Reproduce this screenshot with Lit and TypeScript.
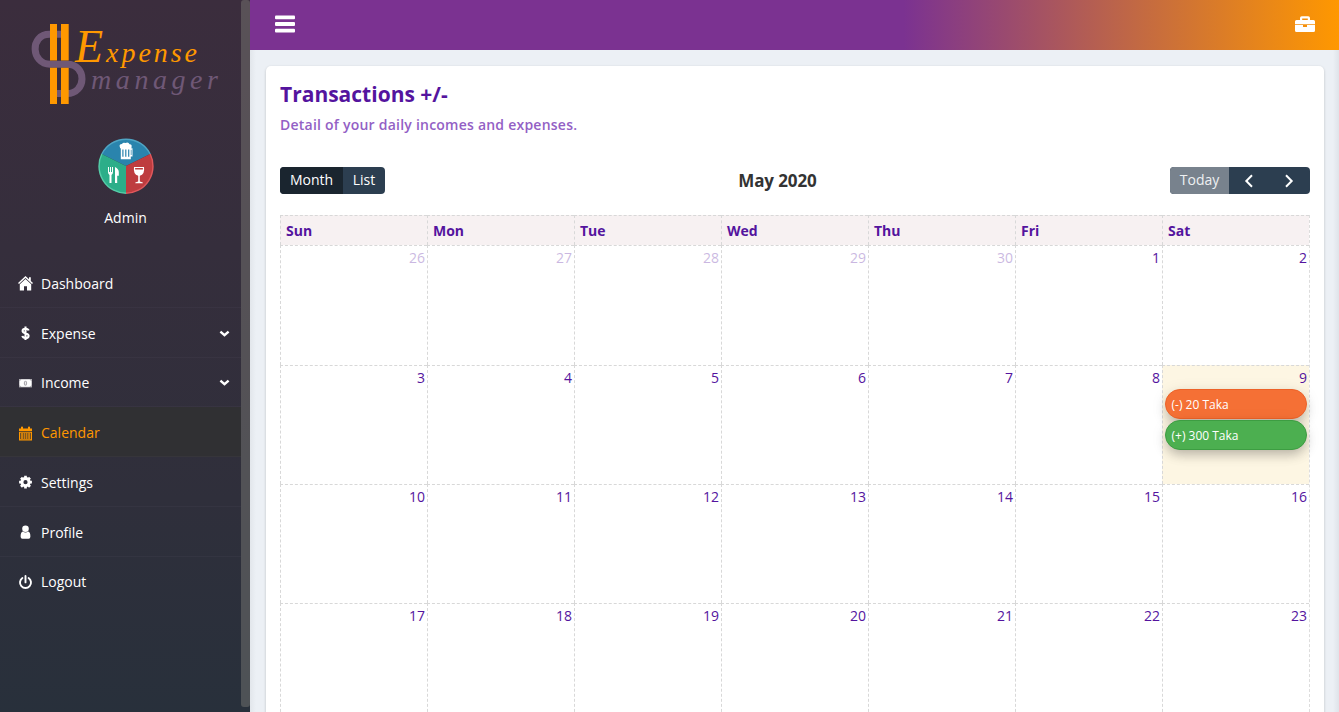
import { LitElement, html, css, svg, nothing } from "lit";
import { customElement, property } from "lit/decorators.js";
import { classMap } from "lit/directives/class-map.js";

const icons: Record<string, unknown> = {
  home: svg`<path d="M7.5 0 0 7 1 8.1 7.5 2.1 14 8.1 15 7 12.8 5V1.2H11V3.3Z"/><path d="M7.5 2.9 1.8 8.2V14.4H6V10.2H9V14.4H13.2V8.2Z"/>`,
  dollar: svg`<path d="M7.5 .5V14M10.6 4.6C10.2 3.1 9.1 2.7 7.6 2.7 5.9 2.7 4.6 3.4 4.6 4.9 4.6 8 10.6 6.6 10.6 9.8 10.6 11.4 9.2 12.1 7.6 12.1 5.9 12.1 4.7 11.5 4.4 9.9" fill="none" stroke="currentColor" stroke-width="2.1"/>`,
  money: svg`<path d="M1 3H14V11.4H1Z" opacity=".6"/><path fill-rule="evenodd" d="M3.4 3.6H11.6L13.4 5.2V9.2L11.6 10.8H3.4L1.6 9.2V5.2ZM7.5 4.7C5.3 4.7 5.3 9.7 7.5 9.7S9.7 4.7 7.5 4.7Z"/><path d="M7.1 5.8H7.9V8.6H7.1Z"/>`,
  calendar: svg`<path fill-rule="evenodd" d="M1 2.6H3V1Q3 .4 4 .4T5 1V2.6H10V1Q10 .4 11 .4T12 1V2.6H14V5H1ZM1 5.7H14V14.4H1ZM2.3 6.8V13.2H12.7V6.8Z"/><path d="M3 7.2H5V8.7H3ZM5.5 7.2H7.3V8.7H5.5ZM7.8 7.2H9.6V8.7H7.8ZM10.1 7.2H12V8.7H10.1ZM3 9.2H5V10.7H3ZM5.5 9.2H7.3V10.7H5.5ZM7.8 9.2H9.6V10.7H7.8ZM10.1 9.2H12V10.7H10.1ZM3 11.2H5V12.7H3ZM5.5 11.2H7.3V12.7H5.5ZM7.8 11.2H9.6V12.7H7.8ZM10.1 11.2H12V12.7H10.1Z"/>`,
  gear: svg`<circle cx="7.5" cy="7.2" r="3.6" fill="none" stroke="currentColor" stroke-width="3"/><path d="M7.5 .8V3.2M7.5 11.2V13.6M1.1 7.2H3.5M11.5 7.2H13.9M3 2.7 4.7 4.4M10.3 10 12 11.7M12 2.7 10.3 4.4M4.7 10 3 11.7" stroke="currentColor" stroke-width="2.7"/>`,
  user: svg`<circle cx="7.5" cy="3.7" r="3.3"/><path d="M4.9 6.4Q7.5 8.7 10.1 6.4Q12.4 7 12.4 11.5Q12.4 13.7 10.6 13.7H4.4Q2.6 13.7 2.6 11.5Q2.6 7 4.9 6.4Z"/>`,
  power: svg`<path d="M4.4 3A5.5 5.5 0 1 0 10.6 3M7.5 1V7.4" fill="none" stroke="currentColor" stroke-width="1.9" stroke-linecap="round"/>`,
};

interface Item {
  label: string;
  icon: string;
  active?: boolean;
  sub?: boolean;
}

const menu: Item[] = [
  { label: "Dashboard", icon: "home" },
  { label: "Expense", icon: "dollar", sub: true },
  { label: "Income", icon: "money", sub: true },
  { label: "Calendar", icon: "calendar", active: true },
  { label: "Settings", icon: "gear" },
  { label: "Profile", icon: "user" },
  { label: "Logout", icon: "power" },
];

@customElement("brand-logo")
export class BrandLogo extends LitElement {
  static styles = css`
    :host { display: block; height: 104px; }
    .logo { display: block; }
    .script { font-family: "Z003", "URW Chancery L", "Liberation Serif", serif; font-style: italic; }
  `;
  render() {
    return html`<svg class="logo" width="240" height="110" viewBox="0 0 240 110">
      <path d="M61 34.3H49.5C29.5 34.3 31 64.2 50 64.2H67C87.5 64.2 86.5 93.6 67 93.6H57" fill="none" stroke="#6f5876" stroke-width="7"/>
      <path d="M50 24H57V60.6H50ZM61 24H68.7V60.6H61ZM50 67.7H57V104H50ZM61 67.7H68.7V104H61Z" fill="#ff9800"/>
      <text class="script" x="75" y="61.5" font-size="28" fill="#ff9800" textLength="122" lengthAdjust="spacing"><tspan font-size="46">E</tspan>xpense</text>
      <text class="script" x="91" y="88.5" font-size="28" fill="#6f5876" textLength="127" lengthAdjust="spacing">manager</text>
    </svg>`;
  }
}

@customElement("user-badge")
export class UserBadge extends LitElement {
  static styles = css`
    :host { display: flex; flex-direction: column; align-items: center; padding: 34px 0 0 10px; height: 120px; }
    .name { margin-top: 13px; line-height: 22px; font-size: 14px; color: #fff; }
  `;
  render() {
    return html`<svg width="56" height="56" viewBox="0 0 56 56">
        <path d="M28 28 3.8 16A27 27 0 0 1 52.2 16Z" fill="#2a84ad"/>
        <path d="M28 28 52.2 16A27 27 0 0 1 28 55Z" fill="#be3c3f"/>
        <path d="M28 28V55A27 27 0 0 1 3.8 16Z" fill="#2cae89"/>
        <g fill="none" stroke-width="1.4">
          <path d="M3.8 16A27.2 27.2 0 0 1 52.2 16" stroke="#4fa5c4"/>
          <path d="M52.2 16A27.2 27.2 0 0 1 28 55.2" stroke="#e0585c"/>
          <path d="M28 55.2A27.2 27.2 0 0 1 3.8 16" stroke="#56cda9"/>
        </g>
        <g fill="#fff">
          <path d="M22 9.5Q20.5 6 24 6Q25 4 27.5 5Q30.5 3.8 31.5 6.2Q34.3 6 33.5 9.3V10.3H22Z"/>
          <path fill-rule="evenodd" d="M22.8 9.5H32.8V10.2H34.5V18.5H32.8V21.3H22.8ZM24.3 11.5V18.8H25.5V11.5ZM27.2 11.5V18.8H28.4V11.5ZM30.1 11.5V18.8H31.3V11.5ZM32.8 11.7V17H33.5V11.7Z"/>
          <path d="M10 29H11V34H12V29H13V34H14V29H15V34Q15 36 13.5 37V45H11.5V37Q10 36 10 34Z"/>
          <path d="M17 29Q20.8 31 20.8 34V37.8H19.2V45H17Z"/>
          <path fill-rule="evenodd" d="M36 29H46Q47 36.6 41.8 37.7V43.6L44.8 44.4V45.2H37.3V44.4L40.2 43.6V37.7Q35 36.6 36 29ZM37.1 30.1V31.6H44.9V30.1Z"/>
        </g>
      </svg>
      <span class="name">Admin</span>`;
  }
}

@customElement("side-nav")
export class SideNav extends LitElement {
  static styles = css`
    :host { display: flex; width: 250px; flex: none; height: 100%; overflow: hidden; background: linear-gradient(#3b2d3d 0, #352e3c 35%, #2f2f3b 70%, #28303b 100%); }
    .body { width: 241px; flex: none; }
    .menu { list-style: none; margin: 0; padding: 0; }
    .item { display: flex; align-items: center; box-sizing: border-box; height: 49.75px; padding: 3px 11px 0 18px; border-bottom: 1px solid rgba(85, 75, 95, 0.18); color: #fff; font-size: 14px; line-height: 22px; }
    .item.active { background: #303033; color: #ff9800; }
    .item:last-child { border-bottom-color: transparent; }
    .icon { width: 15px; height: 15px; margin-right: 8px; fill: currentColor; flex: none; }
    .label { flex: 1; }
    .rail { width: 9px; height: 707px; background: rgba(130, 130, 125, 0.42); border-radius: 3px; }
  `;
  render() {
    return html`<div class="body">
        <brand-logo></brand-logo>
        <user-badge></user-badge>
        <ul class="menu">
          ${menu.map(
            (m) => html`<li class=${classMap({ item: true, active: !!m.active })}>
              <svg class="icon" viewBox="0 0 15 15">${icons[m.icon]}</svg>
              <span class="label">${m.label}</span>
              ${m.sub
                ? html`<svg width="11" height="8" viewBox="0 0 11 8"><path d="M1.4 1.6 5.5 5.2 9.6 1.6" fill="none" stroke="#fff" stroke-width="2.4"/></svg>`
                : nothing}
            </li>`
          )}
        </ul>
      </div>
      <div class="rail"></div>`;
  }
}

@customElement("top-bar")
export class TopBar extends LitElement {
  static styles = css`
    :host { display: flex; align-items: center; justify-content: space-between; height: 50px; box-sizing: border-box; padding: 0 24px 2px 25px; background: linear-gradient(90deg, #7b3291 0, #7b3291 60%, #ff9800 100%); }
    .glyph { display: block; fill: #fff; }
  `;
  render() {
    return html`<svg class="glyph" width="20" height="20" viewBox="0 0 20 20">
        <rect y="1.5" width="20" height="3.8" rx="1"/><rect y="8.1" width="20" height="3.8" rx="1"/><rect y="14.7" width="20" height="3.8" rx="1"/>
      </svg>
      <svg class="glyph" width="20" height="18" viewBox="0 0 20 18">
        <path fill-rule="evenodd" d="M5 5V3Q5 1.2 6.8 1.2H13.2Q15 1.2 15 3V5H18.5Q20 5 20 6.5V9.2H0V6.5Q0 5 1.5 5ZM7.2 5H12.8V3.6H7.2Z"/>
        <path d="M0 10.1H8V12H12V10.1H20V15.5Q20 17 18.5 17H1.5Q0 17 0 15.5Z"/>
      </svg>`;
  }
}

interface Day {
  n: number;
  other?: boolean;
  today?: boolean;
  events?: { text: string; kind: string }[];
}

const days: Day[] = Array.from({ length: 28 }, (_, i) => {
  if (i < 5) return { n: 26 + i, other: true };
  const n = i - 4;
  if (n === 9) {
    return { n, today: true, events: [{ text: "(-) 20 Taka", kind: "out" }, { text: "(+) 300 Taka", kind: "in" }] };
  }
  return { n };
});

@customElement("month-calendar")
export class MonthCalendar extends LitElement {
  @property({ type: String }) heading = "May 2020";
  static styles = css`
    :host { display: block; }
    .toolbar { display: flex; justify-content: space-between; height: 27px; }
    .heading { margin: 0; font-size: 17px; line-height: 28px; font-weight: 700; letter-spacing: -0.1px; color: #333; }
    .group { display: flex; border-radius: 4px; overflow: hidden; background: #2c3e50; }
    .btn { display: flex; align-items: center; justify-content: center; box-sizing: border-box; height: 27px; padding: 0 0 2px; border: 0; background: none; color: #fff; font: 14px "Open Sans", sans-serif; }
    .month { width: 63px; background: #1a252f; }
    .list { width: 42px; }
    .today-btn { width: 59px; background: #78828d; color: #eef0f2; }
    .arrow { width: 40.5px; padding: 1px 0 0; }
    .arrow:last-child { padding-right: 1px; }
    .grid { display: grid; grid-template-columns: repeat(7, 147px); grid-template-rows: 30px 120px 119px 119px 119px; width: 1029px; margin-top: 21px; border-right: 1px dashed #ddd; }
    .head { box-sizing: border-box; padding: 0 5px; border-left: 1px dashed #d8d8d8; border-top: 1px dashed #d8d8d8; background: #f7f1f2; color: #54149e; font-size: 14px; line-height: 30px; font-weight: 700; }
    .day { min-width: 0; box-sizing: border-box; padding: 1px 2px 0; border-left: 1px dashed #d8d8d8; border-top: 1px dashed #d8d8d8; color: #54149e; font-size: 14px; line-height: 21px; text-align: right; }
    .other .num { opacity: 0.3; }
    .today { background: #fdf6e3; }
    .num { display: block; padding-bottom: 1px; }
    .event { display: block; box-sizing: border-box; height: 30px; margin-bottom: 1px; padding-left: 5.5px; border: 1px solid; border-radius: 15px; font-size: 12px; line-height: 29px; text-align: left; color: #fff; box-shadow: 0 6px 12px -2px rgba(0, 0, 0, 0.22), 0 3px 16px rgba(0, 0, 0, 0.1); }
    .out { background: #f57035; border-color: #ed6228; }
    .in { background: #4caf50; border-color: #3d9d42; }
  `;
  render() {
    return html`<div class="toolbar">
        <div class="group"><button class="btn month">Month</button><button class="btn list">List</button></div>
        <h2 class="heading">${this.heading}</h2>
        <div class="group">
          <button class="btn today-btn">Today</button>
          <button class="btn arrow" aria-label="Previous"><svg width="10" height="14" viewBox="0 0 10 14"><path d="M8 1.2 2.3 7 8 12.8" fill="none" stroke="#fff" stroke-width="2"/></svg></button>
          <button class="btn arrow" aria-label="Next"><svg width="10" height="14" viewBox="0 0 10 14"><path d="M2 1.2 7.7 7 2 12.8" fill="none" stroke="#fff" stroke-width="2"/></svg></button>
        </div>
      </div>
      <div class="grid">
        ${["Sun", "Mon", "Tue", "Wed", "Thu", "Fri", "Sat"].map((d) => html`<div class="head">${d}</div>`)}
        ${days.map(
          (d) => html`<div class=${classMap({ day: true, other: !!d.other, today: !!d.today })}>
            <span class="num">${d.n}</span>
            ${d.events?.map((e) => html`<span class="event ${e.kind}">${e.text}</span>`)}
          </div>`
        )}
      </div>`;
  }
}

@customElement("app-root")
export class AppRoot extends LitElement {
  static styles = css`
    :host { display: flex; height: 712px; overflow: hidden; background: #ecf0f5; font-family: "Open Sans", sans-serif; }
    .main { flex: 1; min-width: 0; display: flex; flex-direction: column; }
    .content { flex: 1; padding: 16px 15px 0 16px; min-height: 0; background: linear-gradient(90deg, #e2e6eb 0, #ecf0f5 6px, #ecf0f5 1083px, #dfe3e9 1089px); }
    .card { box-sizing: border-box; height: 700px; padding: 14px 14px 0; background: #fff; border-radius: 5px; box-shadow: 0 1px 3px rgba(0, 0, 0, 0.2); }
    .title { margin: 0; font-size: 21px; line-height: 28px; font-weight: 700; color: #54149e; }
    .sub { margin: 6px 0 32px; font-size: 14px; line-height: 21px; font-weight: 600; letter-spacing: 0.23px; color: #9360c5; }
  `;
  render() {
    return html`<side-nav></side-nav>
      <div class="main">
        <top-bar></top-bar>
        <div class="content">
          <section class="card">
            <h1 class="title">Transactions +/-</h1>
            <p class="sub">Detail of your daily incomes and expenses.</p>
            <month-calendar></month-calendar>
          </section>
        </div>
      </div>`;
  }
}
